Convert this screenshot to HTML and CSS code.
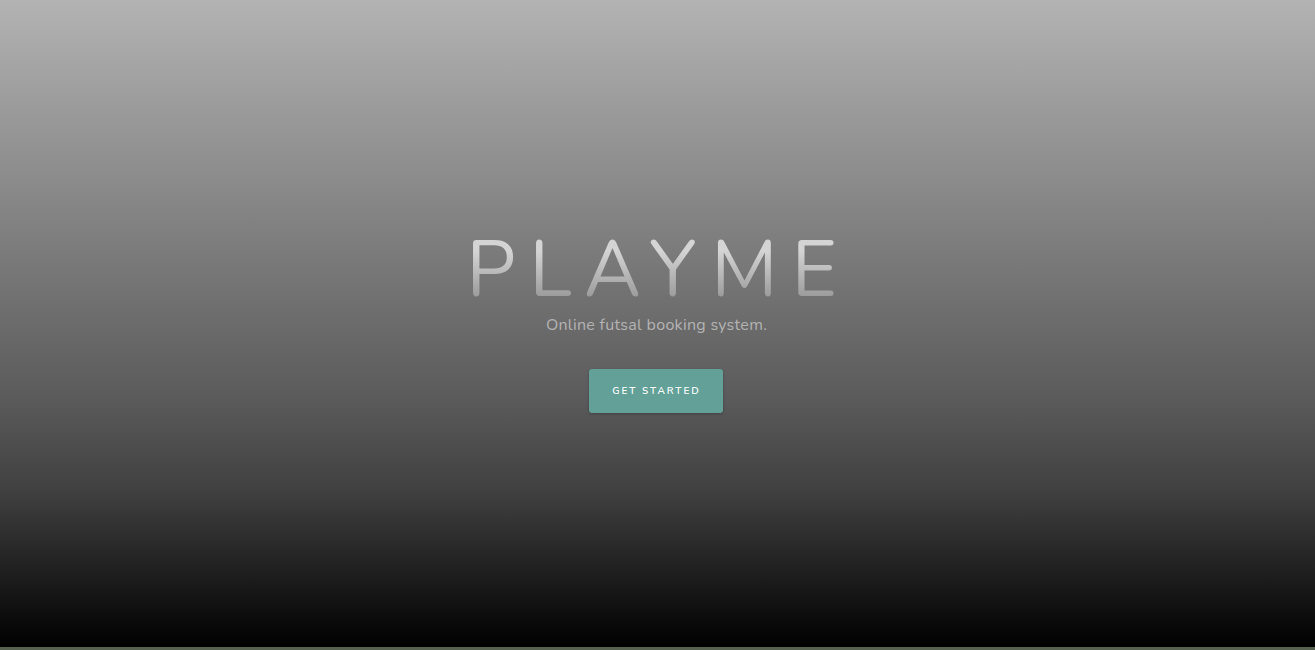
FILE: index.html
```html
<!DOCTYPE html>
<html lang="en">
<head>
<meta charset="utf-8">
<title>PlayMe</title>
<link rel="stylesheet" href="styles.css">
</head>
<body>
<section class="hero">
  <div class="hero-content">
    <h1 class="brand">PLAYME</h1>
    <p class="tagline">Online futsal booking system.</p>
    <a class="btn" href="#">GET STARTED</a>
  </div>
</section>
<div class="footer-strip"></div>
</body>
</html>
```
FILE: styles.css
```css
html, body {
  margin: 0;
  padding: 0;
  height: 100%;
  overflow: hidden;
}
body {
  font-family: "Nunito", "Lato", "Open Sans", sans-serif;
  background: #56614f;
}
.hero {
  height: 647px;
  background: linear-gradient(to bottom, #b3b3b3 0%, #5a5a5a 62%, #404040 76%, #000 100%);
  display: flex;
  justify-content: center;
  align-items: flex-start;
}
.hero-content {
  display: flex;
  flex-direction: column;
  align-items: center;
  padding-top: 231px;
  padding-right: 2px;
}
.brand {
  margin: 0;
  font-family: "Nunito", "Lato", sans-serif;
  font-weight: 400;
  font-size: 78px;
  letter-spacing: 13.8px;
  line-height: 80px;
  padding-left: 4px;
  background: linear-gradient(to bottom, #d4d4d4 25%, #999 85%);
  -webkit-background-clip: text;
  background-clip: text;
  color: transparent;
}
.tagline {
  margin: 3px 0 0;
  font-size: 16px;
  line-height: 22px;
  color: #b3b3b3;
  letter-spacing: 0.3px;
}
.btn {
  margin-top: 33px;
  width: 134px;
  height: 44px;
  box-sizing: border-box;
  display: flex;
  align-items: center;
  justify-content: center;
  background: #62a098;
  color: #fff;
  text-decoration: none;
  font-size: 10px;
  font-weight: 600;
  letter-spacing: 2px;
  border-radius: 3px;
  box-shadow: 0 1px 3px rgba(0,0,0,0.25);
}
.footer-strip {
  height: 3px;
  background: #56614f;
}
```
